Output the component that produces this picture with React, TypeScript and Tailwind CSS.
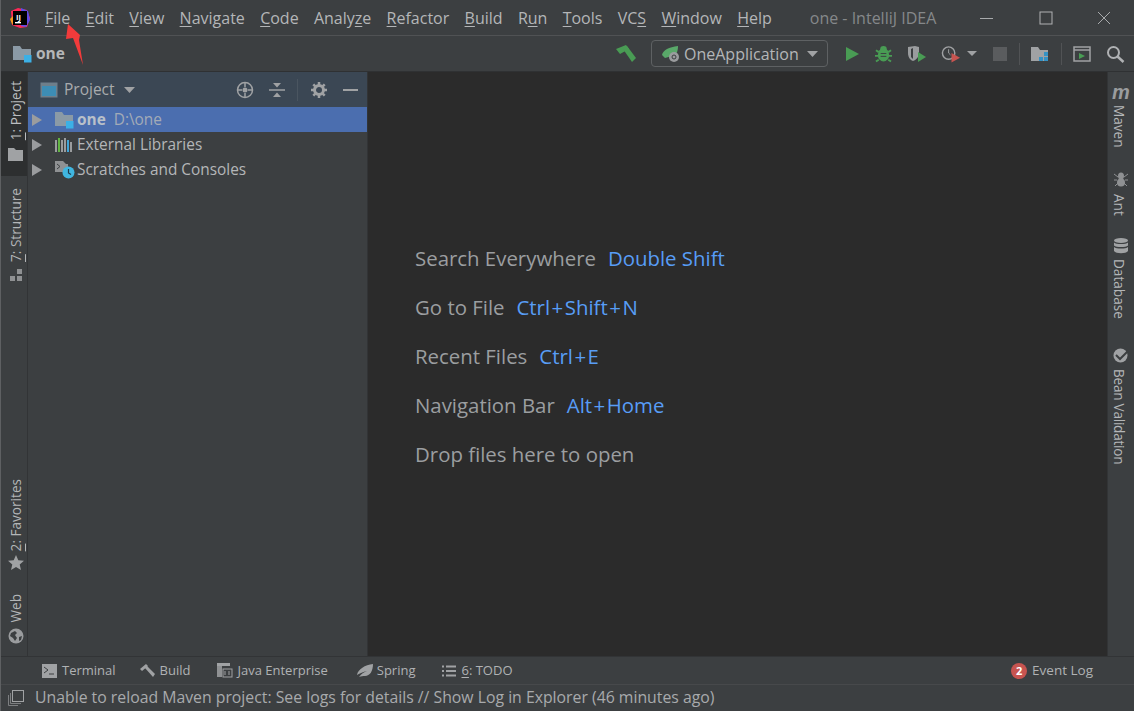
import React from "react";

const font = { fontFamily: '"Open Sans","Noto Sans",sans-serif' };

function Folder({ cls = "" }: { cls?: string }) {
  return (
    <svg width="19" height="18" viewBox="0 0 19 18" className={cls}>
      <path d="M0 1h7l2 3h9v11H0z" fill="#8b9aa6" />
      <rect x="11" y="10" width="7.500" height="7.500" fill="#3cb0e6" />
    </svg>
  );
}

function Menu({ pre, u, post }: { pre?: string; u: string; post: string }) {
  return (
    <span>
      {pre}
      <span className="underline underline-offset-2">{u}</span>
      {post}
    </span>
  );
}

function Arrow() {
  return (
    <svg width="10" height="12" viewBox="0 0 10 12" className="shrink-0">
      <path d="M0 0l10 6-10 6z" fill="#9a9c9e" />
    </svg>
  );
}

function VText({ children, right, cls = "" }: { children: React.ReactNode; right?: boolean; cls?: string }) {
  return (
    <span className={`${right ? "[writing-mode:vertical-rl] mr-[3px]" : "[writing-mode:vertical-rl] rotate-180"} text-[13.600px] leading-none text-[#b4b6b8] whitespace-nowrap ${cls}`}>
      {children}
    </span>
  );
}

function Tip({ label, keys }: { label: string; keys?: string }) {
  const parts = keys ? keys.split("+") : [];
  return (
    <div className="h-[49px] flex items-start gap-3 text-[20.400px] leading-[28px] whitespace-nowrap">
      <span className="text-[#9b9ea0]">{label}</span>
      {keys && (
        <span className="text-[#589df6]">
          {parts.map((p, i) => (
            <React.Fragment key={p}>
              {i > 0 && <span className="mx-[1.500px]">+</span>}
              {p}
            </React.Fragment>
          ))}
        </span>
      )}
    </div>
  );
}

function Row({ children, sel }: { children: React.ReactNode; sel?: boolean }) {
  return (
    <div className={`h-[25px] flex items-center pl-[4px] text-[15.400px] whitespace-nowrap ${sel ? "bg-[#4b6eaf]" : ""}`}>
      {children}
    </div>
  );
}

export default function App() {
  return (
    <div style={font} className="relative w-[1134px] h-[711px] overflow-hidden flex flex-col bg-[#3c3f41] text-[#b4b6b8] border-l border-[#5e6062]">
      {/* Title bar */}
      <div className="h-[36px] shrink-0 flex items-center border-b border-[#505254] text-[16px]">
        <svg width="22" height="22" viewBox="0 0 22 22" className="ml-[8px] mr-[14px] shrink-0">
          <path d="M2 4L9 1l9 2 3 8-3 9-7 1-8-3z" fill="#fe2857" />
          <path d="M12 1l7 3 2 9-4 7-5-1z" fill="#5d4ce6" />
          <path d="M1 12l3-3 4 9-5-1z" fill="#fd9a1f" />
          <rect x="4" y="4" width="14" height="14" fill="#000" />
          <rect x="6" y="15" width="6" height="1.400" fill="#fff" />
          <text x="7" y="12.500" fontSize="7.500" fontWeight="700" fill="#fff">IJ</text>
        </svg>
        <div className="flex gap-[15.300px] whitespace-nowrap">
          <Menu u="F" post="ile" />
          <Menu u="E" post="dit" />
          <Menu u="V" post="iew" />
          <Menu u="N" post="avigate" />
          <Menu u="C" post="ode" />
          <Menu pre="Analy" u="z" post="e" />
          <Menu u="R" post="efactor" />
          <Menu u="B" post="uild" />
          <Menu pre="R" u="u" post="n" />
          <Menu u="T" post="ools" />
          <Menu pre="VC" u="S" post="" />
          <Menu u="W" post="indow" />
          <Menu u="H" post="elp" />
        </div>
        <span className="ml-[38px] text-[#85888a] whitespace-nowrap">one - IntelliJ IDEA</span>
        <div className="ml-auto flex items-center shrink-0">
          <svg width="14" height="14" viewBox="0 0 14 14" className="mr-[45px]"><path d="M0 7.500h13" stroke="#a8aaac" strokeWidth="1" /></svg>
          <svg width="14" height="14" viewBox="0 0 14 14" className="mr-[44px]"><rect x="1" y="1" width="12" height="12" fill="none" stroke="#b0b2b4" /></svg>
          <svg width="14" height="14" viewBox="0 0 14 14" className="mr-[23px]"><path d="M1 1l12 12M13 1L1 13" stroke="#a8aaac" /></svg>
        </div>
      </div>

      {/* Navigation bar */}
      <div className="h-[36px] shrink-0 flex items-center border-b border-[#2f3133]">
        <Folder cls="ml-[12px] mr-[4px]" />
        <span className="font-bold text-[15.500px] text-[#b4b6b8]">one</span>
        <div className="ml-auto flex items-center">
          <svg width="22" height="20" viewBox="0 0 22 20" className="mr-[14px]">
            <path d="M1 5L11 1l3 4-9 5z" fill="#499c54" />
            <path d="M8 5l4-3 9 12-4 4z" fill="#499c54" />
          </svg>
          <div className="w-[177px] h-[27px] rounded-[4px] border border-[#5e6163] flex items-center pl-[9px] text-[16px]">
            <svg width="20" height="18" viewBox="0 0 20 18" className="mr-[3px] shrink-0">
              <path d="M1 10C2 5 8 2 17 1c0 6-2 10-6 10l-7 2z" fill="#59a869" />
              <circle cx="13" cy="12" r="5" fill="#9a9c9e" />
              <circle cx="13" cy="12" r="2" fill="none" stroke="#3c3f41" />
            </svg>
            <span className="whitespace-nowrap">OneApplication</span>
            <svg width="11" height="6" viewBox="0 0 11 6" className="ml-[8px]"><path d="M0 0h11L5.500 6z" fill="#a0a2a4" /></svg>
          </div>
          <svg width="13" height="16" viewBox="0 0 13 16" className="ml-[18px]"><path d="M0 1l13 7-13 7z" fill="#499c54" /></svg>
          <svg width="17" height="18" viewBox="0 0 18 18" className="ml-[16px]">
            <ellipse cx="9" cy="10" rx="6" ry="7" fill="#499c54" />
            <circle cx="9" cy="4" r="3.500" fill="#499c54" />
            <path d="M1 5l3 2M17 5l-3 2M0 11h4M18 11h-4M1 17l3-2M17 17l-3-2" stroke="#499c54" strokeWidth="2" />
            <path d="M6 8.500h6M6 11.500h6" stroke="#3c3f41" />
          </svg>
          <svg width="20" height="18" viewBox="0 0 20 18" className="ml-[15px]">
            <path d="M1 2l7-1 4 1v6c0 4-3 7-6 8-3-1-5-4-5-8z" fill="#9a9c9e" />
            <path d="M6 3v11l-2-2V4z" fill="#3c3f41" />
            <path d="M11 7l8 5-8 5z" fill="#499c54" />
          </svg>
          <svg width="20" height="18" viewBox="0 0 21 18" className="ml-[14px]">
            <circle cx="8" cy="8" r="6.500" fill="none" stroke="#a0a2a4" strokeWidth="1.500" />
            <path d="M8 4v4l2 2" fill="none" stroke="#a0a2a4" />
            <path d="M11 8l9 5-9 5z" fill="#c75450" />
          </svg>
          <svg width="10" height="5" viewBox="0 0 10 5" className="ml-[6px]"><path d="M0 0h10L5 5z" fill="#a0a2a4" /></svg>
          <div className="w-[14px] h-[14px] bg-[#5a5c5e] ml-[16px]" />
          <div className="w-px h-[22px] bg-[#515355] ml-[12px]" />
          <svg width="20" height="16" viewBox="0 0 20 16" className="ml-[10px]">
            <path d="M1 1h7l2 3h8v11H1z" fill="#a0a2a4" />
            <rect x="14" y="6" width="4" height="4" fill="#3592c4" />
            <rect x="9" y="11" width="4" height="4" fill="#3592c4" />
            <rect x="14" y="11" width="4" height="4" fill="#3592c4" />
          </svg>
          <div className="w-px h-[22px] bg-[#515355] ml-[11px]" />
          <svg width="18" height="16" viewBox="0 0 18 16" className="ml-[11px]">
            <rect x="1" y="1" width="16" height="14" fill="none" stroke="#a0a2a4" strokeWidth="1.500" />
            <path d="M1 4h16" stroke="#a0a2a4" strokeWidth="1.500" />
            <path d="M6 7l6 3-6 3z" fill="#499c54" />
          </svg>
          <svg width="19" height="18" viewBox="0 0 19 18" className="ml-[15px] mr-[9px]">
            <circle cx="7.500" cy="7.500" r="5.500" fill="none" stroke="#b0b2b4" strokeWidth="2" />
            <path d="M11.500 11.500l6 5.500" stroke="#b0b2b4" strokeWidth="2.500" />
          </svg>
        </div>
      </div>

      {/* Main */}
      <div className="flex-1 min-h-0 flex">
        {/* Left strip */}
        <div className="w-[27px] shrink-0 flex flex-col border-r border-[#323436]">
          <div className="h-[104px] bg-[#2d2f30] flex flex-col items-center pl-[3px] pt-[9px] gap-[8px]">
            <VText cls="text-[#bbbdbf]"><span className="underline underline-offset-2">1</span>: Project</VText>
            <svg width="15" height="13" viewBox="0 0 15 13"><path d="M0 0h6l2 2h7v11H0z" fill="#a0a2a4" /></svg>
          </div>
          <div className="flex flex-col items-center pl-[3px] pt-[12px] gap-[6px]">
            <VText><span className="underline underline-offset-2">7</span>: Structure</VText>
            <svg width="14" height="14" viewBox="0 0 14 14">
              <rect x="8" y="1" width="5" height="5" fill="#8f9193" />
              <rect x="1" y="8" width="5" height="5" fill="#8f9193" />
              <rect x="8" y="8" width="5" height="5" fill="#8f9193" />
            </svg>
          </div>
          <div className="mt-auto flex flex-col items-center pl-[3px] pb-[12px]">
            <VText><span className="underline underline-offset-2">2</span>: Favorites</VText>
            <svg width="16" height="15" viewBox="0 0 16 15" className="mt-[4px]"><path d="M8 0l2.300 5.200 5.700.5-4.300 3.700 1.300 5.600L8 12l-5 3 1.300-5.600L0 5.700l5.700-.5z" fill="#a0a2a4" /></svg>
            <VText cls="mt-[24px]">Web</VText>
            <svg width="16" height="16" viewBox="0 0 16 16" className="mt-[5px]">
              <circle cx="8" cy="8" r="7.500" fill="#9a9c9e" />
              <path d="M3 5l4-2 2 2-2 2 2 3-2 3-2-3-3-2zM11 9l3-1-1 4-2 1z" fill="#3c3f41" />
            </svg>
          </div>
        </div>

        {/* Project panel */}
        <div className="w-[340px] shrink-0 flex flex-col border-r border-[#323436]">
          <div className="h-[35px] shrink-0 bg-[#3b4754] flex items-center text-[15.500px]">
            <svg width="18" height="16" viewBox="0 0 18 16" className="ml-[12px] mr-[6px]">
              <rect x="0.500" y="0.500" width="17" height="15" fill="#6e7f8b" />
              <rect x="2" y="4" width="14" height="10" fill="#3d8db5" />
            </svg>
            <span className="text-[#a9abad]">Project</span>
            <svg width="11" height="6" viewBox="0 0 11 6" className="ml-[9px]"><path d="M0 0h11L5.500 6z" fill="#a0a2a4" /></svg>
            <div className="ml-auto flex items-center">
              <svg width="18" height="18" viewBox="0 0 18 18" className="mr-[15px]">
                <circle cx="9" cy="9" r="7.500" fill="none" stroke="#a0a2a4" strokeWidth="1.500" />
                <circle cx="9" cy="9" r="2.500" fill="#a0a2a4" />
                <path d="M9 1v5M9 12v5M1 9h5M12 9h5" stroke="#a0a2a4" strokeWidth="1.500" />
              </svg>
              <svg width="16" height="16" viewBox="0 0 16 16" className="mr-[12px]">
                <path d="M0 8h16" stroke="#a0a2a4" strokeWidth="1.500" />
                <path d="M4 1h8L8 5.500zM4 15h8l-4-4.500z" fill="#a0a2a4" />
              </svg>
              <div className="w-px h-[22px] bg-[#4a5560] mr-[13px]" />
              <svg width="16" height="16" viewBox="0 0 16 16" className="mr-[16px]">
                <circle cx="8" cy="8" r="4.500" fill="none" stroke="#a0a2a4" strokeWidth="3" />
                <path d="M8 0v3M8 13v3M0 8h3M13 8h3M2.300 2.300l2 2M11.700 11.700l2 2M13.700 2.300l-2 2M4.300 11.700l-2 2" stroke="#a0a2a4" strokeWidth="2.500" />
              </svg>
              <div className="w-[15px] h-[2px] bg-[#a0a2a4] mr-[9px]" />
            </div>
          </div>
          <div className="flex-1">
            <Row sel>
              <Arrow />
              <Folder cls="ml-[13px] mr-[3px]" />
              <span className="font-bold text-[#b9c0c9]">one</span>
              <span className="ml-[8px] text-[#a3abb7]">D:\one</span>
            </Row>
            <Row>
              <Arrow />
              <svg width="19" height="16" viewBox="0 0 19 16" className="ml-[13px] mr-[3px]">
                <rect x="0" y="3" width="2" height="12" fill="#9a9c9e" />
                <rect x="3" y="1" width="2" height="14" fill="#62b543" />
                <rect x="6" y="3" width="2" height="12" fill="#9a9c9e" />
                <rect x="9" y="1" width="2" height="14" fill="#9a9c9e" />
                <rect x="12" y="3" width="2" height="12" fill="#40a5d8" />
                <rect x="15" y="5" width="2" height="10" fill="#9a9c9e" />
              </svg>
              <span>External Libraries</span>
            </Row>
            <Row>
              <Arrow />
              <svg width="20" height="18" viewBox="0 0 20 18" className="ml-[13px] mr-[2px]">
                <path d="M0 0h8l3 3h2v8H0z" fill="#8f9193" />
                <path d="M2 3l3 2.500-3 2.500" fill="none" stroke="#3c3f41" />
                <circle cx="13.500" cy="11.500" r="6" fill="#40b6e0" />
                <path d="M13.500 8v4l2.500 1.500" fill="none" stroke="#1c3a4a" strokeWidth="1.200" />
              </svg>
              <span>Scratches and Consoles</span>
            </Row>
          </div>
        </div>

        {/* Editor */}
        <div className="flex-1 min-w-0 bg-[#2b2b2b] flex flex-col pl-[47px] pt-[172px]">
          <Tip label="Search Everywhere" keys="Double Shift" />
          <Tip label="Go to File" keys="Ctrl+Shift+N" />
          <Tip label="Recent Files" keys="Ctrl+E" />
          <Tip label="Navigation Bar" keys="Alt+Home" />
          <Tip label="Drop files here to open" />
        </div>

        {/* Right strip */}
        <div className="w-[27px] shrink-0 flex flex-col items-center pt-[11px] border-l border-[#323436]">
          <span className="text-[20px] leading-[18px] font-bold italic text-[#9a9c9e] font-['Liberation_Sans']">m</span>
          <VText right cls="mt-[4px]">Maven</VText>
          <svg width="14" height="18" viewBox="0 0 14 16" className="mt-[22px]">
            <ellipse cx="7" cy="5" rx="3" ry="3.500" fill="#8f9193" />
            <ellipse cx="7" cy="11.500" rx="4" ry="4" fill="#8f9193" />
            <path d="M0 3l4 3M14 3l-4 3M0 9h3M14 9h-3M1 15l3-3M13 15l-3-3" stroke="#8f9193" />
          </svg>
          <VText right cls="mt-[6px]">Ant</VText>
          <svg width="14" height="16" viewBox="0 0 14 16" className="mt-[23px]">
            <ellipse cx="7" cy="2.500" rx="7" ry="2.500" fill="#a0a2a4" />
            <path d="M0 4.500c2 2 12 2 14 0v3c-2 2-12 2-14 0zM0 9c2 2 12 2 14 0v4c-2 3-12 3-14 0z" fill="#a0a2a4" />
          </svg>
          <VText right cls="mt-[5px]">Database</VText>
          <svg width="16" height="15" viewBox="0 0 16 15" className="mt-[29px]">
            <circle cx="7.500" cy="7.500" r="7" fill="#a0a2a4" />
            <path d="M3 7l4 4 8-8" fill="none" stroke="#3c3f41" strokeWidth="2" />
          </svg>
          <VText right cls="mt-[6px] tracking-[-0.250px]">Bean Validation</VText>
        </div>
      </div>

      {/* Tool window bar */}
      <div className="h-[29px] shrink-0 flex items-center border-t border-[#323436] border-b border-b-[#47494b] text-[13px] text-[#b0b2b4] whitespace-nowrap">
        <svg width="15" height="14" viewBox="0 0 15 14" className="ml-[41px] mr-[5px]">
          <rect width="15" height="14" fill="#a0a2a4" />
          <path d="M2 3l4 3-4 3M7 10h5" fill="none" stroke="#3c3f41" />
        </svg>
        <span>Terminal</span>
        <svg width="17" height="15" viewBox="0 0 17 15" className="ml-[23px] mr-[4px]">
          <path d="M1 6l6-5 2 2-6 5zM6 5l2-2 8 8-2 3z" fill="#a0a2a4" />
        </svg>
        <span>Build</span>
        <svg width="16" height="15" viewBox="0 0 16 15" className="ml-[27px] mr-[4px]">
          <path d="M0 0h13v3H0z" fill="#a0a2a4" />
          <path d="M0 3h5v11H0z" fill="#8f9193" />
          <rect x="6" y="6" width="9" height="8" fill="none" stroke="#a0a2a4" />
          <path d="M8 8v4M12 8v4" stroke="#a0a2a4" />
        </svg>
        <span>Java Enterprise</span>
        <svg width="16" height="14" viewBox="0 0 16 14" className="ml-[29px] mr-[4px]">
          <path d="M0 11C1 5 8 1 16 0c0 7-3 12-8 12-2 0-4 0-6 1 2-3 5-5 8-6-4 1-7 2-10 4z" fill="#a0a2a4" />
        </svg>
        <span>Spring</span>
        <svg width="14" height="12" viewBox="0 0 14 12" className="ml-[27px] mr-[5px]">
          <path d="M0 1.500h2M4 1.500h10M0 6h2M4 6h10M0 10.500h2M4 10.500h10" stroke="#a0a2a4" strokeWidth="2" />
        </svg>
        <span><span className="underline underline-offset-2">6</span>: TODO</span>
        <div className="ml-auto flex items-center mr-[41px] text-[13.500px]">
          <span className="w-[16px] h-[16px] rounded-full bg-[#c75450] text-white text-[11px] font-bold leading-[16px] text-center mr-[5px]">2</span>
          <span>Event Log</span>
        </div>
      </div>

      {/* Status bar */}
      <div className="h-[26px] shrink-0 flex items-center text-[15.800px] text-[#a8aaac] whitespace-nowrap">
        <svg width="16" height="16" viewBox="0 0 16 16" className="ml-[7px] mr-[11px]">
          <rect x="4.500" y="0.500" width="11" height="11" fill="none" stroke="#a0a2a4" />
          <path d="M2.500 3v10.500H13M0.500 5v10.500H10" fill="none" stroke="#7d7f81" />
        </svg>
        <span>Unable to reload Maven project: See logs for details // Show Log in Explorer (46 minutes ago)</span>
      </div>

      {/* Red annotation arrow */}
      <svg width="30" height="50" viewBox="0 0 30 50" className="absolute left-[60px] top-[20px]">
        <path d="M7 4L19 15 18 20 22 45 12 18 5 19z" fill="#f23b3b" />
      </svg>
    </div>
  );
}
